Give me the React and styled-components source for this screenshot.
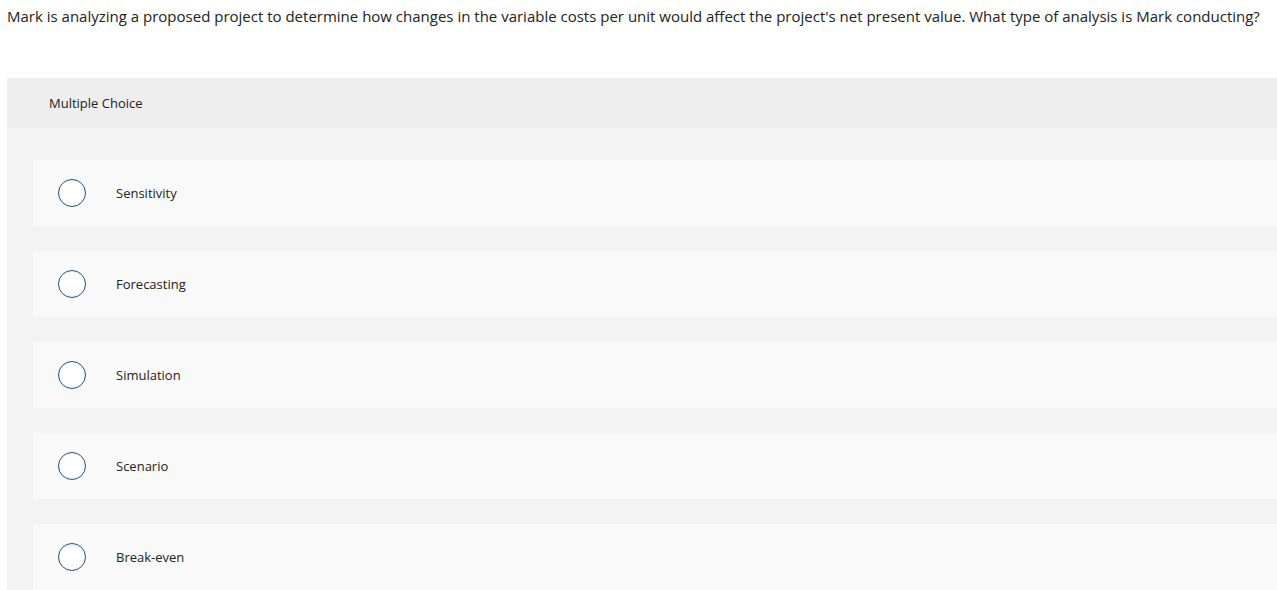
import styled, { createGlobalStyle } from 'styled-components';

const GlobalStyle = createGlobalStyle`
  body {
    margin: 0;
    background: #fff;
    font-family: "Open Sans", Lato, "Liberation Sans", sans-serif;
    color: #1a1a1a;
  }
`;

const Page = styled.div`
  padding: 6px 0 0 7px;
`;

const Question = styled.p`
  margin: 0;
  font-size: 15px;
  line-height: 20px;
  color: #222;
  white-space: nowrap;
`;

const Panel = styled.section`
  margin-top: 52px;
  background: #f3f3f3;
`;

const PanelHeader = styled.div`
  height: 50px;
  display: flex;
  align-items: center;
  padding-left: 42px;
  background: #eeeeee;
  font-size: 13px;
  color: #222;
`;

const Options = styled.div`
  display: flex;
  flex-direction: column;
  gap: 25px;
  padding: 32px 0 24px 26px;
`;

const Option = styled.label`
  height: 66px;
  display: flex;
  align-items: center;
  padding-left: 25px;
  background: #f9f9f9;
  cursor: pointer;
`;

const Radio = styled.span`
  width: 28px;
  height: 28px;
  box-sizing: border-box;
  border-radius: 50%;
  border: 1.5px solid #1f4f7d;
  background: #fff;
  flex-shrink: 0;
`;

const OptionText = styled.span`
  margin-left: 30px;
  font-size: 13px;
  color: #222;
`;

const choices = ['Sensitivity', 'Forecasting', 'Simulation', 'Scenario', 'Break-even'];

const App = () => (
  <Page>
    <GlobalStyle />
    <Question>
      Mark is analyzing a proposed project to determine how changes in the variable costs per unit would affect the project's net present value. What type of analysis is Mark conducting?
    </Question>
    <Panel>
      <PanelHeader>Multiple Choice</PanelHeader>
      <Options>
        {choices.map((c) => (
          <Option key={c}>
            <Radio />
            <OptionText>{c}</OptionText>
          </Option>
        ))}
      </Options>
    </Panel>
  </Page>
);

export default App;
